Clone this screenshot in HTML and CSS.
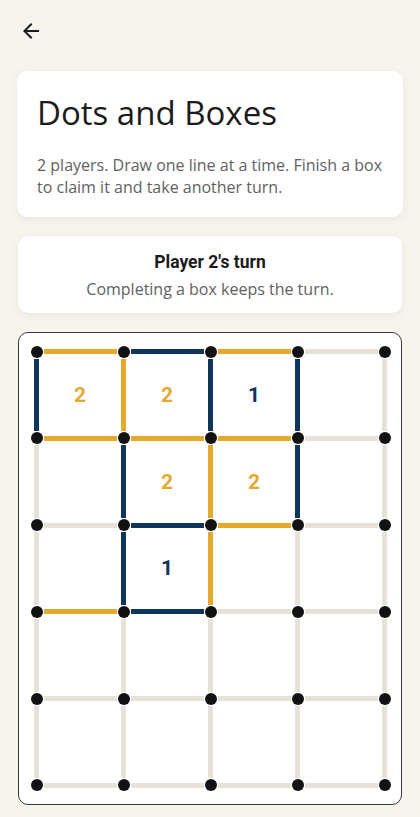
FILE: index.html
```html
<!DOCTYPE html>
<html lang="en">
<head>
    <meta charset="UTF-8">
    <meta name="viewport" content="width=device-width, initial-scale=1.0">
    <title>Dots and Boxes</title>
    <link rel="stylesheet" href="styles.css">
</head>
<body>
    <div class="app">
        <header class="topbar">
            <button class="back" aria-label="Back">
                <svg viewBox="0 0 24 24" width="24" height="24"><path d="M20 11H7.83l5.59-5.59L12 4l-8 8 8 8 1.41-1.41L7.83 13H20v-2z"/></svg>
            </button>
        </header>

        <div class="card intro">
            <h1>Dots and Boxes</h1>
            <p>2 players. Draw one line at a time. Finish a box to claim it and take another turn.</p>
        </div>

        <div class="card status">
            <h2>Player 2's turn</h2>
            <p>Completing a box keeps the turn.</p>
        </div>

        <div class="board">
            <div class="grid" id="grid"></div>
        </div>
    </div>

    <script>
        // 0 = empty, 1 = player 1 (navy), 2 = player 2 (gold)
        const hLines = [
            [2, 1, 2, 0],
            [2, 2, 2, 0],
            [0, 1, 2, 0],
            [2, 1, 0, 0],
            [0, 0, 0, 0],
            [0, 0, 0, 0]
        ];
        const vLines = [
            [1, 2, 1, 1, 0],
            [0, 1, 2, 1, 0],
            [0, 1, 2, 0, 0],
            [0, 0, 0, 0, 0],
            [0, 0, 0, 0, 0]
        ];
        const boxes = [
            [2, 2, 1, 0],
            [0, 2, 2, 0],
            [0, 1, 0, 0],
            [0, 0, 0, 0],
            [0, 0, 0, 0]
        ];

        const grid = document.getElementById("grid");
        const lineClass = ["", " p1", " p2"];

        function cell(cls, text) {
            let el = document.createElement("div");
            el.className = cls;
            if (text) el.innerText = text;
            grid.appendChild(el);
        }

        for (let r = 0; r < 6; r++) {
            for (let c = 0; c < 5; c++) {
                cell("dot");
                if (c < 4) cell("hline" + lineClass[hLines[r][c]]);
            }
            if (r < 5) {
                for (let c = 0; c < 5; c++) {
                    cell("vline" + lineClass[vLines[r][c]]);
                    if (c < 4) {
                        let owner = boxes[r][c];
                        cell("box" + lineClass[owner], owner ? String(owner) : "");
                    }
                }
            }
        }
    </script>
</body>
</html>
```

FILE: styles.css
```css
* {
    padding: 0;
    margin: 0;
    box-sizing: border-box;
}
body {
    background: #f7f4ee;
    font-family: "Open Sans", sans-serif;
    color: #1b1b1b;
}
.app {
    padding: 0 17px 10px 17px;
}
.topbar {
    height: 62px;
    display: flex;
    align-items: center;
}
.back {
    border: none;
    background: none;
    width: 24px;
    height: 24px;
    margin-left: 2px;
    cursor: pointer;
}
.back svg {
    fill: #1b1b1b;
    display: block;
}
.card {
    background: #fff;
    border-radius: 10px;
    box-shadow: 0 2px 8px rgba(60, 45, 20, 0.07);
}
.intro {
    margin-top: 9px;
    padding: 21px 20px 19px 20px;
}
.intro h1 {
    font-size: 33px;
    font-weight: 400;
    line-height: 42px;
}
.intro p {
    margin-top: 20px;
    font-size: 16px;
    line-height: 22px;
    color: #616161;
}
.status {
    margin: 19px 1px 0 1px;
    padding: 14px 16px 13px 16px;
    text-align: center;
}
.status h2 {
    font-family: Roboto, sans-serif;
    font-size: 17.5px;
    font-weight: 700;
    line-height: 24px;
}
.status p {
    margin-top: 4px;
    font-size: 16px;
    line-height: 22px;
    color: #616161;
}
.board {
    margin: 19px 1px 0 1px;
    background: #fff;
    border: 1.5px solid #3a3a3a;
    border-radius: 10px;
    padding: 12.5px 10px 12.5px 11.5px;
}
.grid {
    display: grid;
    grid-template-columns: repeat(4, 12px 75px) 12px;
    grid-template-rows: repeat(5, 12px 74.8px) 12px;
}
.dot {
    width: 12px;
    height: 12px;
    border-radius: 50%;
    background: #121212;
    position: relative;
    z-index: 1;
}
.hline {
    height: 5px;
    align-self: center;
    margin: 0 1px;
    background: #e7e2d8;
}
.vline {
    width: 5px;
    justify-self: center;
    margin: 1px 0;
    background: #e7e2d8;
}
.hline.p1, .vline.p1 {
    background: #0f355c;
}
.hline.p2, .vline.p2 {
    background: #e5a92e;
}
.box {
    display: flex;
    align-items: center;
    justify-content: center;
    font-family: Roboto, sans-serif;
    font-weight: 700;
    font-size: 21px;
}
.box.p1 {
    color: #0f355c;
}
.box.p2 {
    color: #e5a92e;
}
```
